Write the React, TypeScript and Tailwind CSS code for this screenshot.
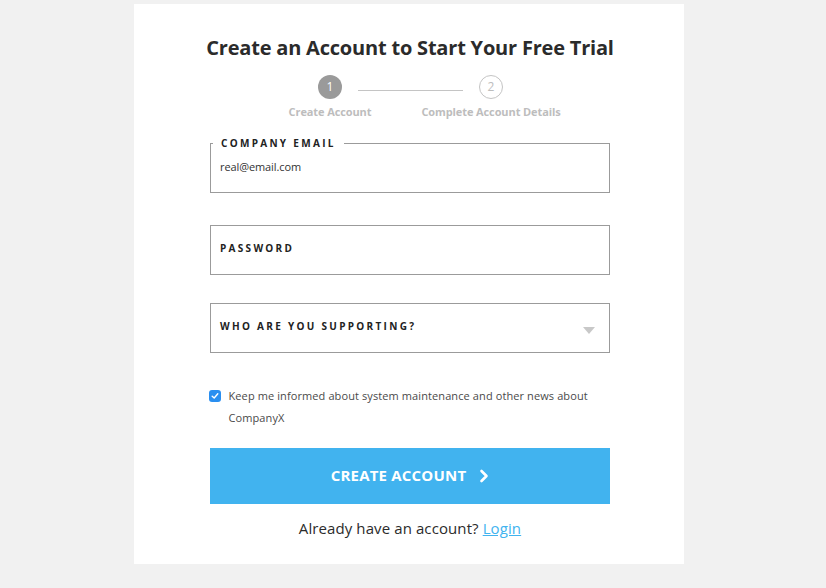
import React from "react";

export default function App() {
  return (
    <div className="min-h-[588px] w-full bg-[#f1f1f1] flex justify-center pt-[4px] pr-[8px]" style={{ fontFamily: "'Open Sans', sans-serif" }}>
      <div className="w-[550px] h-[560px] bg-white flex flex-col items-center pl-[76px] pr-[74px] pt-[30px]">
        <h1 className="text-[20px] leading-[28px] font-bold text-[#2b2b2b] tracking-[-0.2px] whitespace-nowrap">
          Create an Account to Start Your Free Trial
        </h1>

        {/* Stepper */}
        <div className="mt-[13px] w-[400px] flex items-start">
          <div className="ml-[70px] flex flex-col items-center w-[100px]">
            <div className="w-[24px] h-[24px] rounded-full bg-[#9a9a9a] text-white text-[12px] flex items-center justify-center">1</div>
            <div className="mt-[5px] text-[11px] font-bold text-[#bdbdbd] whitespace-nowrap tracking-[-0.1px]">Create Account</div>
          </div>
          <div className="mt-[15px] h-px bg-[#c4c4c4] w-[105px] ml-[-22px] shrink-0"></div>
          <div className="flex flex-col items-center w-[180px] ml-[-62px] shrink-0">
            <div className="w-[24px] h-[24px] rounded-full border border-[#c4c4c4] text-[#bdbdbd] text-[12px] flex items-center justify-center">2</div>
            <div className="mt-[5px] text-[11px] font-bold text-[#bdbdbd] whitespace-nowrap tracking-[-0.1px]">Complete Account Details</div>
          </div>
        </div>

        {/* Email */}
        <div className="mt-[22px] w-[400px] h-[50px] border border-[#9b9b9b] relative flex items-center px-[9px]">
          <span className="absolute left-[2px] top-[-8px] bg-white px-[8px] text-[10px] font-bold tracking-[2.3px] text-[#222] leading-[15px]">COMPANY EMAIL</span>
          <span className="text-[11px] text-[#333] tracking-[-0.1px]">real@email.com</span>
        </div>

        {/* Password */}
        <div className="mt-[32px] w-[400px] h-[50px] border border-[#9b9b9b] flex items-center px-[9px] pb-[3px]">
          <span className="text-[10px] font-bold tracking-[2.3px] text-[#222]">PASSWORD</span>
        </div>

        {/* Select */}
        <div className="mt-[28px] w-[400px] h-[50px] border border-[#9b9b9b] flex items-center justify-between pl-[9px] pr-[14px]">
          <span className="text-[10px] font-bold tracking-[2.3px] text-[#222] pb-[3px]">WHO ARE YOU SUPPORTING?</span>
          <svg width="12" height="7" viewBox="0 0 12 7" className="mt-[6px]">
            <polygon points="0,0 12,0 6,7" fill="#c8c8c8" />
          </svg>
        </div>

        {/* Checkbox */}
        <div className="mt-[32px] w-[401px] ml-[-2px] flex items-start">
          <div className="mt-[5px] w-[12px] h-[12px] rounded-[3px] bg-[#2a8ff0] flex items-center justify-center shrink-0">
            <svg width="8" height="8" viewBox="0 0 8 8">
              <path d="M1.2 4.2 L3.2 6 L6.8 1.8" stroke="white" strokeWidth="1.4" fill="none" strokeLinecap="round" strokeLinejoin="round" />
            </svg>
          </div>
          <p className="ml-[8px] text-[11px] leading-[22px] text-[#4a4a4a] tracking-[0.1px]">
            Keep me informed about system maintenance and other news about CompanyX
          </p>
        </div>

        {/* Button */}
        <button className="mt-[19px] w-[400px] h-[56px] bg-[#41b3ef] flex items-center justify-center text-white text-[15px] font-bold tracking-[0.2px]">
          <span>CREATE ACCOUNT</span>
          <svg width="10" height="14" viewBox="0 0 10 14" className="ml-[13px]">
            <path d="M2.5 2 L7.5 7 L2.5 12" stroke="white" strokeWidth="2.6" fill="none" strokeLinecap="round" strokeLinejoin="round" />
          </svg>
        </button>

        <p className="mt-[13px] text-[15px] text-[#2b2b2b] tracking-[0.1px]">
          Already have an account? <a className="text-[#41b3ef] underline">Login</a>
        </p>
      </div>
    </div>
  );
}
